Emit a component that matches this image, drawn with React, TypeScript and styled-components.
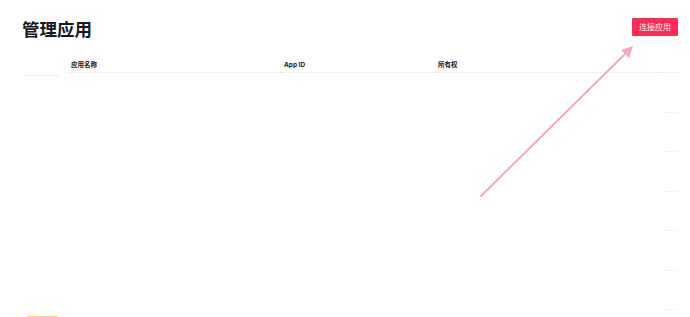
import React from "react";
import styled, { createGlobalStyle } from "styled-components";

const GlobalStyle = createGlobalStyle`
  html, body {
    margin: 0;
    padding: 0;
    background: #ffffff;
  }
  body {
    font-family: Inter, "Noto Sans CJK SC", "Noto Sans", sans-serif;
    color: #161823;
  }
`;

const ROW_COUNT = 6;

function App() {
  // display page heading with connect button
  const displayHeader = () => {
    return (
      <Header>
        <Title>管理应用</Title>
        <ConnectButton>连接应用</ConnectButton>
      </Header>
    );
  };

  // display table head
  const displayTableHead = () => {
    return (
      <HeadRow>
        <LeadCell $underline />
        <HeadCell $width={213}>应用名称</HeadCell>
        <HeadCell $width={154}>App ID</HeadCell>
        <HeadCell $width={228}>所有权</HeadCell>
        <HeadCell $width={17} />
      </HeadRow>
    );
  };

  // display empty rows
  const displayRows = () => {
    return Array.from({ length: ROW_COUNT }).map((_, i) => (
      <BodyRow key={i}>
        <LeadCell />
        <BodyCell $width={595} />
        <ActionCell />
      </BodyRow>
    ));
  };

  /* ********** Main return statement of this component ********** */
  return (
    <Page>
      <GlobalStyle />
      {displayHeader()}
      <Table>
        {displayTableHead()}
        {displayRows()}
        <FooterRow>
          <LoadingBar />
        </FooterRow>
      </Table>
      <Pointer width="690" height="317" viewBox="0 0 690 317">
        <line
          x1="481"
          y1="196"
          x2="626"
          y2="53"
          stroke="#f7a6bf"
          strokeWidth="2"
          strokeLinecap="round"
        />
        <polygon points="633,46 621,50 629,58" fill="#f7a6bf" />
      </Pointer>
    </Page>
  );
}

export default App;

const Page = styled.div`
  position: relative;
  width: 690px;
  height: 317px;
  overflow: hidden;
  box-sizing: border-box;
  padding: 0 12px 0 22px;
`;

const Header = styled.div`
  display: flex;
  align-items: center;
  justify-content: space-between;
  height: 58px;
`;

const Title = styled.h1`
  margin: 0;
  font-family: "Noto Sans CJK SC", sans-serif;
  font-size: 17.5px;
  font-weight: 700;
  line-height: 1;
  letter-spacing: 0;
  color: #161823;
`;

const ConnectButton = styled.button`
  height: 18px;
  padding: 0 7px;
  border: none;
  border-radius: 1px;
  background: #fe2c55;
  color: #ffffff;
  font-family: "Noto Sans CJK SC", sans-serif;
  font-size: 8px;
  line-height: 18px;
  margin-bottom: 4px;
`;

const Table = styled.div`
  display: flex;
  flex-direction: column;
  padding-left: 4px;
`;

const HeadRow = styled.div`
  display: flex;
  align-items: stretch;
  height: 15px;
`;

const LeadCell = styled.div<{ $underline?: boolean }>`
  width: 33px;
  margin-right: 9px;
  flex-shrink: 0;
  box-sizing: border-box;
  ${(p) =>
    p.$underline &&
    `
    height: 18px;
    border-bottom: 1px solid #efefef;
  `}
`;

const HeadCell = styled.div<{ $width: number }>`
  width: ${(p) => p.$width}px;
  flex-shrink: 0;
  box-sizing: border-box;
  padding-left: 3px;
  border-bottom: 1px dotted #e4e4e4;
  font-family: Inter, "Noto Sans CJK SC", sans-serif;
  font-size: 6.5px;
  font-weight: 700;
  line-height: 14px;
  color: #161823;
`;

const BodyRow = styled.div`
  display: flex;
  height: 39.5px;
`;

const BodyCell = styled.div<{ $width: number }>`
  width: ${(p) => p.$width}px;
  flex-shrink: 0;
`;

const ActionCell = styled.div`
  width: 15px;
  flex-shrink: 0;
  box-sizing: border-box;
  border-bottom: 1px dotted #ebebeb;
`;

const FooterRow = styled.div`
  display: flex;
  padding-top: 6px;
`;

const LoadingBar = styled.div`
  width: 31px;
  height: 1px;
  margin-left: 1px;
  background: linear-gradient(
    90deg,
    #f1d468 0%,
    #f1d468 45%,
    #c9c9c9 48%,
    #c9c9c9 58%,
    #f1d468 62%,
    #f1d468 100%
  );
`;

const Pointer = styled.svg`
  position: absolute;
  left: 0;
  top: 0;
  pointer-events: none;
`;
